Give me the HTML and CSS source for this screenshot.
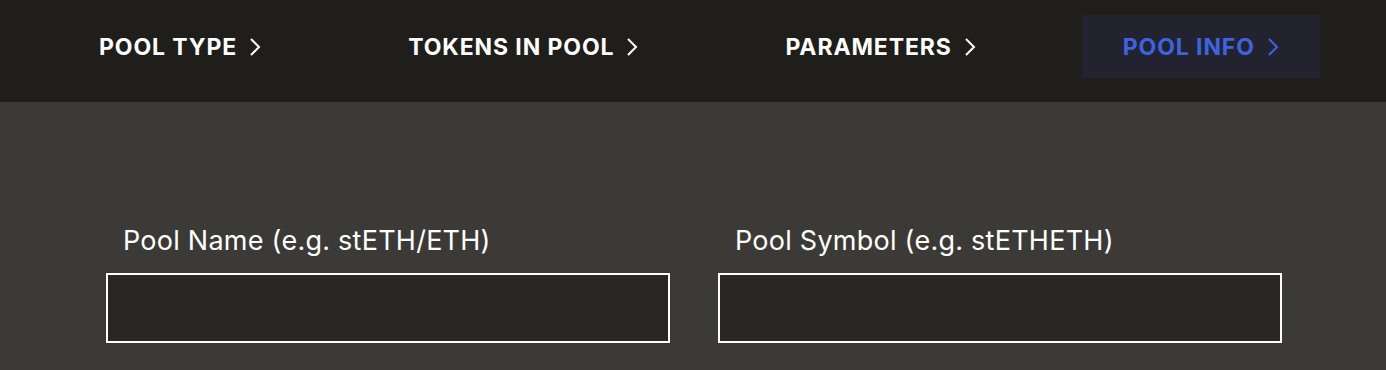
FILE: index.html
```html
<!DOCTYPE html>
<html>
<head>
<meta charset="utf-8">
<link rel="stylesheet" href="styles.css">
</head>
<body>
<header class="steps">
  <div class="step"><span>POOL TYPE</span><svg class="chev" viewBox="0 0 12 20"><path d="M2 2l8 8-8 8"/></svg></div>
  <div class="step"><span>TOKENS IN POOL</span><svg class="chev" viewBox="0 0 12 20"><path d="M2 2l8 8-8 8"/></svg></div>
  <div class="step"><span>PARAMETERS</span><svg class="chev" viewBox="0 0 12 20"><path d="M2 2l8 8-8 8"/></svg></div>
  <div class="step active"><span>POOL INFO</span><svg class="chev" viewBox="0 0 12 20"><path d="M2 2l8 8-8 8"/></svg></div>
</header>
<main class="form">
  <div class="field">
    <label class="label">Pool Name (e.g. stETH/ETH)</label>
    <input class="input" type="text">
  </div>
  <div class="field">
    <label class="label">Pool Symbol (e.g. stETHETH)</label>
    <input class="input" type="text">
  </div>
</main>
</body>
</html>
```
FILE: styles.css
```css
* { box-sizing: border-box; }
html, body { margin: 0; padding: 0; }
body {
  background: #3b3a36;
  font-family: Inter, "Liberation Sans", sans-serif;
  height: 370px;
  overflow: hidden;
}
.steps {
  background: #1f1e1b;
  height: 102px;
  display: flex;
  align-items: flex-start;
  gap: 65px;
  padding: 15px 0 0 58px;
}
.step {
  display: flex;
  align-items: center;
  height: 63px;
  padding: 0 41px;
  color: #ffffff;
  font-weight: 700;
  font-size: 23px;
  letter-spacing: 0.9px;
}
.step .chev {
  width: 12px;
  height: 20px;
  margin-left: 12px;
  fill: none;
  stroke: currentColor;
  stroke-width: 2;
}
.step.active {
  background: #22232e;
  color: #3d63e0;
}
.form {
  display: flex;
  gap: 48px;
  padding: 121px 0 0 106px;
}
.field {
  display: flex;
  flex-direction: column;
  width: 564px;
}
.label {
  color: #ffffff;
  font-size: 27px;
  font-weight: 400;
  letter-spacing: 0.25px;
  padding-left: 17px;
  line-height: 36px;
  margin-bottom: 14px;
}
.input {
  height: 70px;
  background: #272622;
  border: 2px solid #ffffff;
  border-radius: 0;
  outline: none;
  width: 564px;
}
```
